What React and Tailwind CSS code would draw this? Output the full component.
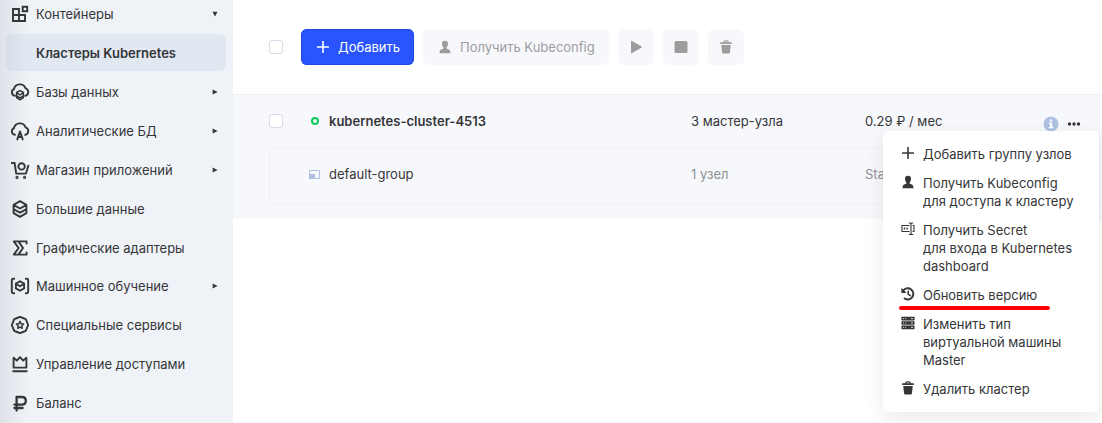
import React from "react";

const line = { fill: "none", stroke: "currentColor", strokeWidth: 1.9, strokeLinejoin: "round", strokeLinecap: "round" };

function Icon({ children, className = "size-5", box = "0 0 20 20" }) {
  return (
    <svg viewBox={box} className={`${className} shrink-0`} aria-hidden="true" {...line}>
      {children}
    </svg>
  );
}

const cloud = "M5 13.8H4.8A3.5 3.5 0 0 1 3.9 7.2A6.1 6.1 0 0 1 15.6 6.4A3.9 3.9 0 0 1 15.6 13.8H15.2";

const icons = {
  blocks: (
    <g strokeLinejoin="miter">
      <path d="M3 5H9V11H15V17H3ZM9 11V17M3 11H9" />
      <path d="M12.7 2.8H17.2V7.3H12.7Z" />
    </g>
  ),
  database: (
    <>
      <path d={cloud} />
      <path d="M6.6 10.5L10 8.7L13.4 10.5V15.6L10 17.8L6.6 15.6ZM6.6 10.8L10 12.8L13.4 10.8M6.8 14L10 15.8L13.2 14" strokeWidth="1.5" />
    </>
  ),
  analytics: (
    <>
      <path d={cloud} />
      <path d="M7.3 18.4L10 10.6L12.7 18.4M8.3 16H11.7" />
    </>
  ),
  cart: (
    <>
      <path d="M1.8 3H4.6L6.2 13.6H16L18.4 5.6" />
      <circle cx="11.6" cy="6.4" r="3.2" />
      <circle cx="7" cy="17.4" r=".6" />
      <circle cx="14.6" cy="17.4" r=".6" />
    </>
  ),
  layers: (
    <path d="M3.6 5.8L10 2.2L16.4 5.8V14.2L10 17.8L3.6 14.2ZM3.8 6.2L10 9.5L16.2 6.2M3.8 10.4L10 13.7L16.2 10.4" />
  ),
  sigma: (
    <path d="M16.6 5.6V3.4H3.8L8.6 10L3.8 16.6H16.6V14.4M8.6 3.6L13 10L8.6 16.4" />
  ),
  learning: (
    <>
      <path d="M4.2 2.8H3.2Q1.8 2.8 1.8 4.2V15.8Q1.8 17.2 3.2 17.2H4.2M15.8 2.8H16.8Q18.2 2.8 18.2 4.2V15.8Q18.2 17.2 16.8 17.2H15.8" />
      <path d="M10 5.2L14.1 7.6V12.4L10 14.8L5.9 12.4V7.6ZM6.2 8L10 10.2L13.8 8" />
    </>
  ),
  services: (
    <>
      <path d="M10 1.9L12.9 3L15.8 4.2L17 7.1L18.2 10L17 12.9L15.8 15.8L12.9 17L10 18.2L7.1 17L4.2 15.8L3 12.9L1.8 10L3 7.1L4.2 4.2L7.1 3Z" />
      <path d="M10 6.4L11.1 8.7L13.6 9L11.8 10.8L12.2 13.3L10 12.1L7.8 13.3L8.2 10.8L6.4 9L8.9 8.7Z" strokeWidth="1.5" />
    </>
  ),
  crown: (
    <path d="M3.6 13.6V3.8L6.8 6.6L10 3.2L13.2 6.6L16.4 3.8V13.6ZM3.2 17.2H16.8" />
  ),
  rouble: (
    <path d="M6.6 17.6V4H12Q15.8 4 15.8 7.8T12 11.6H4.4M4.4 15H12.6" strokeWidth="2.3" />
  ),
};

const services = [
  { icon: "database", label: "Базы данных", more: true },
  { icon: "analytics", label: "Аналитические БД", more: true },
  { icon: "cart", label: "Магазин приложений", more: true },
  { icon: "layers", label: "Большие данные" },
  { icon: "sigma", label: "Графические адаптеры" },
  { icon: "learning", label: "Машинное обучение", more: true },
  { icon: "services", label: "Специальные сервисы" },
  { icon: "crown", label: "Управление доступами" },
  { icon: "rouble", label: "Баланс" },
];

function NavLink({ icon, label, children }) {
  return (
    <a href="#" className="flex flex-1 items-center gap-1.5 pr-[15px] pl-2.5">
      <Icon>{icons[icon]}</Icon>
      <span className="flex-1">{label}</span>
      {children}
    </a>
  );
}

function Arrow({ down }) {
  return (
    <svg viewBox="0 0 6 6" className="size-1.5 shrink-0" fill="currentColor" aria-hidden="true">
      <path d={down ? "M.5 .8H5.5L3 5.4Z" : "M.6 .5L5.6 3L.6 5.5Z"} />
    </svg>
  );
}

function Sidebar() {
  return (
    <nav className="flex min-h-screen w-[233px] shrink-0 flex-col bg-[#eff2f7] bg-linear-to-r from-[#dfe2e8] to-[#eff2f7] to-12% pb-px">
      <div className="flex h-7">
        <NavLink icon="blocks" label="Контейнеры">
          <Arrow down />
        </NavLink>
      </div>
      <a
        href="#"
        aria-current="page"
        className="mt-1.5 mr-[7px] mb-0.5 ml-1.5 flex h-[37px] items-center rounded-md bg-[#e1e8f2] bg-linear-to-r from-[#d8dee8] to-[#e1e8f2] to-10% pl-[30px] font-semibold"
      >
        Кластеры Kubernetes
      </a>
      <ul className="flex flex-1 flex-col">
        {services.map((s) => (
          <li key={s.label} className="flex min-h-8 flex-1">
            <NavLink icon={s.icon} label={s.label}>
              {s.more && <Arrow />}
            </NavLink>
          </li>
        ))}
      </ul>
    </nav>
  );
}

const glyphs = {
  plus: <path d="M8 2V14M2 8H14" strokeWidth="1.6" strokeLinecap="butt" />,
  user: (
    <path
      stroke="none"
      fill="currentColor"
      d="M8 1.8C10.1 1.8 11.1 3 11 5C10.9 6.6 10.4 7.7 9.7 8.5V9.7C11.8 10.2 13.4 10.8 13.4 13V14.2H2.6V13C2.6 10.8 4.2 10.2 6.3 9.7V8.5C5.6 7.7 5.1 6.6 5 5C4.9 3 5.9 1.8 8 1.8Z"
    />
  ),
  play: <path stroke="none" fill="currentColor" d="M3 2.6Q3 1.4 4.1 1.9L13.4 7.3Q14.4 8 13.4 8.7L4.1 14.1Q3 14.6 3 13.4Z" />,
  stop: <rect x="1.5" y="2" width="13" height="12" rx="1.5" stroke="none" fill="currentColor" />,
  trash: (
    <g stroke="none" fill="currentColor">
      <path d="M3.3 6H12.7L12 13.2Q11.9 14.4 10.7 14.4H5.3Q4.1 14.4 4 13.2Z" />
      <path d="M2.2 3.2H5.2Q5.2 1.2 7 1.2H9Q10.8 1.2 10.8 3.2H13.8V5H2.2ZM6.5 3.2H9.5Q9.5 2.4 8.8 2.4H7.2Q6.5 2.4 6.5 3.2Z" fillRule="evenodd" />
    </g>
  ),
  secret: (
    <g strokeWidth="1.1" strokeLinecap="butt" strokeLinejoin="miter">
      <path d="M9.5 4.5H2V10.5H9.5M12.5 4.5H14V10.5H12.5M11 2.5V13M8.8 2H10Q11 2 11 3Q11 2 12 2H13.2M8.8 13.5H10Q11 13.5 11 12.5Q11 13.5 12 13.5H13.2" />
      <path d="M3.8 7.5H5.2M6.4 7.5H7.8" strokeWidth="1.8" />
    </g>
  ),
  history: (
    <>
      <path d="M3.2 4.6A5.6 5.6 0 1 1 4 12" strokeWidth="1.9" strokeLinecap="butt" />
      <path d="M1.4 1.8V7H6.6Z" stroke="none" fill="currentColor" />
      <path d="M8.2 5V8.2L10.4 9.6" strokeWidth="1.5" />
    </>
  ),
  server: (
    <>
      <g stroke="none" fill="currentColor">
        <rect x="1.5" y="1.8" width="13" height="3.6" rx=".4" />
        <rect x="1.5" y="6.2" width="13" height="3.6" rx=".4" />
        <rect x="1.5" y="10.6" width="13" height="3.6" rx=".4" />
      </g>
      <path d="M3 3.6H4M5.2 3.6H6.2M11 3.6H13M3 8H4M5.2 8H6.2M11 8H13M3 12.4H4M5.2 12.4H6.2M11 12.4H13" stroke="white" strokeWidth=".8" strokeLinecap="butt" />
    </>
  ),
};

function Glyph({ name }) {
  return (
    <Icon className="size-4" box="0 0 16 16">
      {glyphs[name]}
    </Icon>
  );
}

function Checkbox({ label }) {
  return (
    <input
      type="checkbox"
      aria-label={label}
      className="size-3.5 shrink-0 appearance-none rounded-[3px] border border-[#d7dae8] bg-white checked:bg-[#2954ff]"
    />
  );
}

function ToolButton({ glyph, label, text }) {
  return (
    <button
      type="button"
      disabled
      aria-label={label}
      className={`flex h-9 items-center justify-center gap-[7px] rounded-md bg-[#f7f8fc] text-[#9d9d9d] ${text ? "px-3.5" : "w-9"}`}
    >
      <Glyph name={glyph} />
      {text}
    </button>
  );
}

function Toolbar() {
  return (
    <div className="flex items-center gap-[9px] px-9 py-[29px]">
      <div className="mr-[9px] flex">
        <Checkbox label="Выбрать все" />
      </div>
      <button type="button" className="flex h-9 items-center gap-[7px] rounded-md bg-[#2954ff] px-3.5 text-white inset-ring inset-ring-[#2148e0]">
        <Glyph name="plus" />
        Добавить
      </button>
      <ToolButton glyph="user" label="Получить Kubeconfig" text="Получить Kubeconfig" />
      <ToolButton glyph="play" label="Запустить" />
      <ToolButton glyph="stop" label="Остановить" />
      <ToolButton glyph="trash" label="Удалить" />
    </div>
  );
}

const actions = [
  { glyph: "plus", lines: ["Добавить группу узлов"] },
  { glyph: "user", lines: ["Получить Kubeconfig", "для доступа к кластеру"] },
  { glyph: "secret", lines: ["Получить Secret", "для входа в Kubernetes", "dashboard"] },
  { glyph: "history", lines: ["Обновить версию"], marked: true },
  { glyph: "server", lines: ["Изменить тип", "виртуальной машины", "Master"] },
  { glyph: "trash", lines: ["Удалить кластер"] },
];

function ActionMenu() {
  return (
    <ul
      role="menu"
      className="absolute top-9 right-[3px] z-10 flex w-[216px] flex-col gap-[11px] rounded-md bg-white px-[17px] py-3.5 shadow-[0_6px_20px_rgba(0,0,0,0.09)]"
    >
      {actions.map((a) => (
        <li key={a.glyph} role="none" className="relative">
          <button type="button" role="menuitem" className="flex items-start gap-[7px] text-left leading-[18px]">
            <Glyph name={a.glyph} />
            <span>
              {a.lines.map((l) => (
                <span key={l} className="block whitespace-nowrap">
                  {l}
                </span>
              ))}
            </span>
          </button>
          {a.marked && <span className="absolute top-5 -left-px h-1 w-[151px] rounded-full bg-[#fb0007]" />}
        </li>
      ))}
    </ul>
  );
}

function Clusters() {
  return (
    <section className="relative border-t border-[#edf0f5] bg-[#f7f8fb] pb-[14px] pl-9">
      <div className="flex h-[52px] items-center">
        <Checkbox label="kubernetes-cluster-4513" />
        <span className="ml-7 size-2 rounded-full border-2 border-[#0dcf5c]" />
        <span className="ml-[10px] w-[362px] font-semibold">kubernetes-cluster-4513</span>
        <span className="w-[174px]">3 мастер-узла</span>
        <span className="flex-1">0.29 ₽ / мес</span>
        <div className="mr-[21px] flex items-center gap-2 pt-1.5">
          <svg viewBox="0 0 16 16" className="size-4" role="img" aria-label="Информация">
            <circle cx="8" cy="8" r="7.5" fill="#afc1e1" />
            <path d="M6.8 3.4H9.2V5.4H6.8ZM6 6.5H9.2V10.8H10.2V12.2H5.8V10.8H6.8V7.9H6Z" fill="white" />
          </svg>
          <button type="button" aria-label="Действия" aria-haspopup="menu">
            <svg viewBox="0 0 14 4" className="h-1 w-3.5" fill="currentColor" aria-hidden="true">
              <circle cx="2.5" cy="2" r="1.7" />
              <circle cx="7" cy="2" r="1.7" />
              <circle cx="11.5" cy="2" r="1.7" />
            </svg>
          </button>
        </div>
      </div>
      <div className="flex h-[58px] items-center rounded-l-md border-y border-l border-[#eff1f5] pb-1 pl-[39px]">
        <svg viewBox="0 0 11 9" className="h-[9px] w-[11px]" aria-hidden="true">
          <path d="M.5 .5H10.5V8.5H.5Z" fill="none" stroke="#afc1e1" />
          <path d="M0 4H6V9H0Z" fill="#afc1e1" />
        </svg>
        <span className="ml-[9px] w-[362px]">default-group</span>
        <span className="w-[174px] text-[#8f9196]">1 узел</span>
        <span className="text-[#8f9196]">Standard</span>
      </div>
      <ActionMenu />
    </section>
  );
}

export default function App() {
  return (
    <div className="flex min-h-screen bg-white font-['Inter',sans-serif] text-[13px] leading-5 text-[#353638]">
      <Sidebar />
      <main className="min-w-0 flex-1">
        <Toolbar />
        <Clusters />
      </main>
    </div>
  );
}
